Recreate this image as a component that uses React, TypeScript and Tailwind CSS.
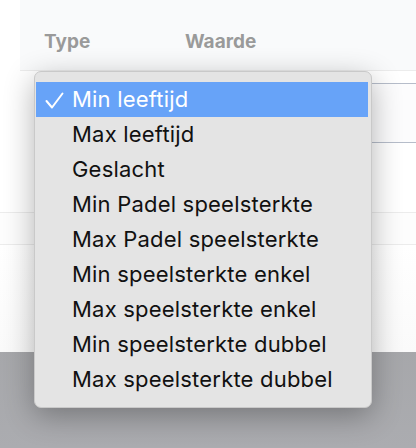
import React from "react";

const items = [
  "Min leeftijd",
  "Max leeftijd",
  "Geslacht",
  "Min Padel speelsterkte",
  "Max Padel speelsterkte",
  "Min speelsterkte enkel",
  "Max speelsterkte enkel",
  "Min speelsterkte dubbel",
  "Max speelsterkte dubbel",
];

export default function App() {
  return (
    <div
      className="relative w-[416px] h-[448px] overflow-hidden bg-gradient-to-b from-[#959596] to-[#abacb0]"
      style={{ fontFamily: "Inter, 'Noto Sans', sans-serif" }}
    >
      <div className="h-[352px] bg-white flex flex-col">
        <div className="ml-[20px] h-[71px] bg-[#f9fafb] border-b border-[#ececec] flex pt-[30px] text-[19px] font-bold text-[#9a9a9a] leading-[24px]">
          <span className="ml-[24px] w-[141px]">Type</span>
          <span>Waarde</span>
        </div>
        <div className="ml-[44px] mt-[12px] h-[60px] border-y border-[#b6bdca] bg-[#fcfcfd]" />
        <div className="h-[69px]" />
        <div className="h-[33px] border-y border-[#ececec] bg-[#fdfdfd]" />
        <div className="flex-1 bg-gradient-to-b from-white to-[#fafafa]" />
      </div>

      <div className="absolute left-[34px] top-[71px] w-[338px] h-[337px] rounded-[7px] bg-[#e4e4e4] border border-[#c9c9c9] shadow-[0_8px_30px_rgba(0,0,0,0.3)] pt-[10px] px-[1px]">
        {items.map((it, i) => (
          <div
            key={it}
            className={
              i === 0
                ? "h-[35px] flex items-center bg-[#67a3f8] text-white mr-[2px] text-[22px] leading-[35px] tracking-[0.2px]"
                : "h-[35px] flex items-center text-[#111111] text-[22px] leading-[35px] tracking-[0.2px]"
            }
          >
            <span className="w-[36px] flex justify-start pl-[9px]">
              {i === 0 ? (
                <svg width="19" height="17" viewBox="0 0 19 17" className="mt-[1px]">
                  <polyline
                    points="1.5,9 7,15.5 17.5,1.5"
                    fill="none"
                    stroke="white"
                    strokeWidth="2"
                    strokeLinecap="round"
                    strokeLinejoin="round"
                  />
                </svg>
              ) : null}
            </span>
            <span>{it}</span>
          </div>
        ))}
      </div>
    </div>
  );
}
